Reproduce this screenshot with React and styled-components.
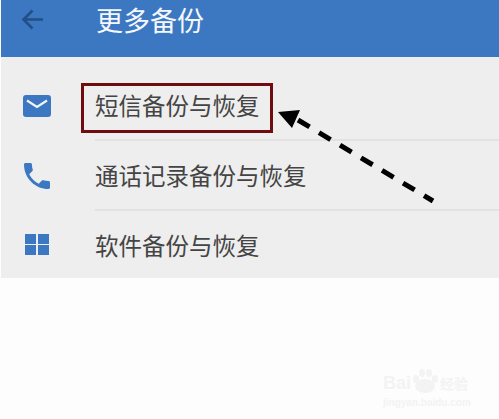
import React from 'react';
import styled, { createGlobalStyle } from 'styled-components';

const GlobalStyle = createGlobalStyle`
    html, body {
        margin: 0;
        padding: 0;
        background: #fdfdfd;
        font-family: "Noto Sans CJK SC", "Noto Sans", sans-serif;
    }
`;

const Page = styled.div`
    position: relative;
    width: 499px;
    height: 419px;
    overflow: hidden;
    background: #fdfdfd;
`;

const Header = styled.header`
    display: flex;
    align-items: center;
    height: 57px;
    padding: 0 0 17px 20px;
    box-sizing: border-box;
    margin-left: 1px;
    background: #3c78c2;
`;

const BackIcon = styled.svg`
    width: 22px;
    height: 21px;
    margin-right: 53px;
    margin-top: -2px;
    flex: none;
`;

const Title = styled.h1`
    margin: 0;
    font-size: 27px;
    font-weight: 400;
    line-height: 36px;
    color: #f4f7fb;
`;

const List = styled.ul`
    margin: 0 0 0 1px;
    padding: 0;
    list-style: none;
    background: #eeeeee;
`;

const Row = styled.li`
    display: flex;
    align-items: center;
    height: ${(p) => p.$height}px;
    padding-top: ${(p) => p.$top || 0}px;
    box-sizing: border-box;
`;

const IconSlot = styled.div`
    display: flex;
    justify-content: center;
    align-items: center;
    width: 72px;
    margin-right: 22px;
    flex: none;
`;

const RowBody = styled.div`
    display: flex;
    align-items: center;
    flex: 1;
    align-self: stretch;
    border-bottom: ${(p) => (p.$last ? 'none' : '2px solid #e2e2e2')};
`;

const Label = styled.span`
    font-size: 23.5px;
    line-height: 32px;
    color: #444444;
`;

const Highlight = styled.div`
    position: absolute;
    left: 81px;
    top: 83px;
    width: 192px;
    height: 50px;
    box-sizing: border-box;
    border: 3px solid #6e0c0f;
`;

const ArrowDrawing = styled.svg`
    position: absolute;
    left: 270px;
    top: 100px;
    width: 175px;
    height: 112px;
`;

const Watermark = styled.div`
    position: absolute;
    left: 383px;
    top: 368px;
    display: flex;
    flex-direction: column;
    width: 90px;
    color: #f3f3f3;
    font-family: "Liberation Sans", sans-serif;
`;

const WatermarkLogo = styled.div`
    display: flex;
    align-items: flex-end;
    height: 25px;
    font-size: 18px;
    font-weight: 700;
    line-height: 20px;
    white-space: nowrap;
`;

const WatermarkHan = styled.span`
    margin-left: 1px;
    font-family: "Noto Sans CJK SC", sans-serif;
    font-size: 14px;
    line-height: 20px;
`;

const WatermarkUrl = styled.span`
    margin-top: 4px;
    font-size: 10px;
    font-weight: 700;
    line-height: 12px;
`;

const ACCENT = '#3c78c2';

function MailIcon() {
    return (
        <svg width="28" height="22" viewBox="0 0 28 22">
            <rect width="28" height="22" rx="3" fill={ACCENT} />
            <path d="M4 5.5l10 6.5 10-6.5" fill="none" stroke="#f2f5f9" strokeWidth="2.2" />
        </svg>
    );
}

function PhoneIcon() {
    return (
        <svg width="26" height="26" viewBox="3 3 18 18">
            <path
                fill={ACCENT}
                d="M6.62 10.79c1.44 2.83 3.76 5.14 6.59 6.59l2.2-2.2c.27-.27.67-.36 1.02-.24 1.12.37 2.33.57 3.57.57.55 0 1 .45 1 1V20c0 .55-.45 1-1 1-9.39 0-17-7.61-17-17 0-.55.45-1 1-1h3.5c.55 0 1 .45 1 1 0 1.25.2 2.45.57 3.57.11.35.03.74-.25 1.02l-2.2 2.2z"
            />
        </svg>
    );
}

function GridIcon() {
    return (
        <svg width="24" height="21" viewBox="0 0 24 21">
            <path fill={ACCENT} d="M0 0h11v10H0zM13 0h11v10H13zM0 11h11v10H0zM13 11h11v10H13z" />
        </svg>
    );
}

function PawIcon() {
    return (
        <svg width="28" height="25" viewBox="0 0 28 25">
            <ellipse cx="5" cy="11" rx="3" ry="4" fill="#f3f3f3" />
            <ellipse cx="11" cy="5" rx="3" ry="4" fill="#f3f3f3" />
            <ellipse cx="18" cy="5" rx="3" ry="4" fill="#f3f3f3" />
            <ellipse cx="24" cy="11" rx="3" ry="4" fill="#f3f3f3" />
            <ellipse cx="14" cy="18" rx="10" ry="7" fill="#f3f3f3" />
        </svg>
    );
}

const rows = [
    { label: '短信备份与恢复', icon: <MailIcon />, height: 84, top: 14 },
    { label: '通话记录备份与恢复', icon: <PhoneIcon />, height: 70 },
    { label: '软件备份与恢复', icon: <GridIcon />, height: 67, last: true },
];

export default function App() {
    return (
        <Page>
            <GlobalStyle />
            <Header>
                <BackIcon viewBox="0 0 22 21">
                    <path d="M22 10.5H3M11.5 1.5l-9 9 9 9" fill="none" stroke="#234f86" strokeWidth="2.6" />
                </BackIcon>
                <Title>更多备份</Title>
            </Header>
            <List>
                {rows.map((row) => (
                    <Row key={row.label} $height={row.height} $top={row.top}>
                        <IconSlot>{row.icon}</IconSlot>
                        <RowBody $last={row.last}>
                            <Label>{row.label}</Label>
                        </RowBody>
                    </Row>
                ))}
            </List>
            <Highlight />
            <ArrowDrawing viewBox="0 0 175 112">
                <path d="M28 20L163 101" fill="none" stroke="#000" strokeWidth="5" strokeDasharray="13.5 11" />
                <path d="M8 12L30 10L22 28Z" fill="#000" />
            </ArrowDrawing>
            <Watermark>
                <WatermarkLogo>
                    Bai
                    <PawIcon />
                    <WatermarkHan>经验</WatermarkHan>
                </WatermarkLogo>
                <WatermarkUrl>jingyan.baidu.com</WatermarkUrl>
            </Watermark>
        </Page>
    );
}
